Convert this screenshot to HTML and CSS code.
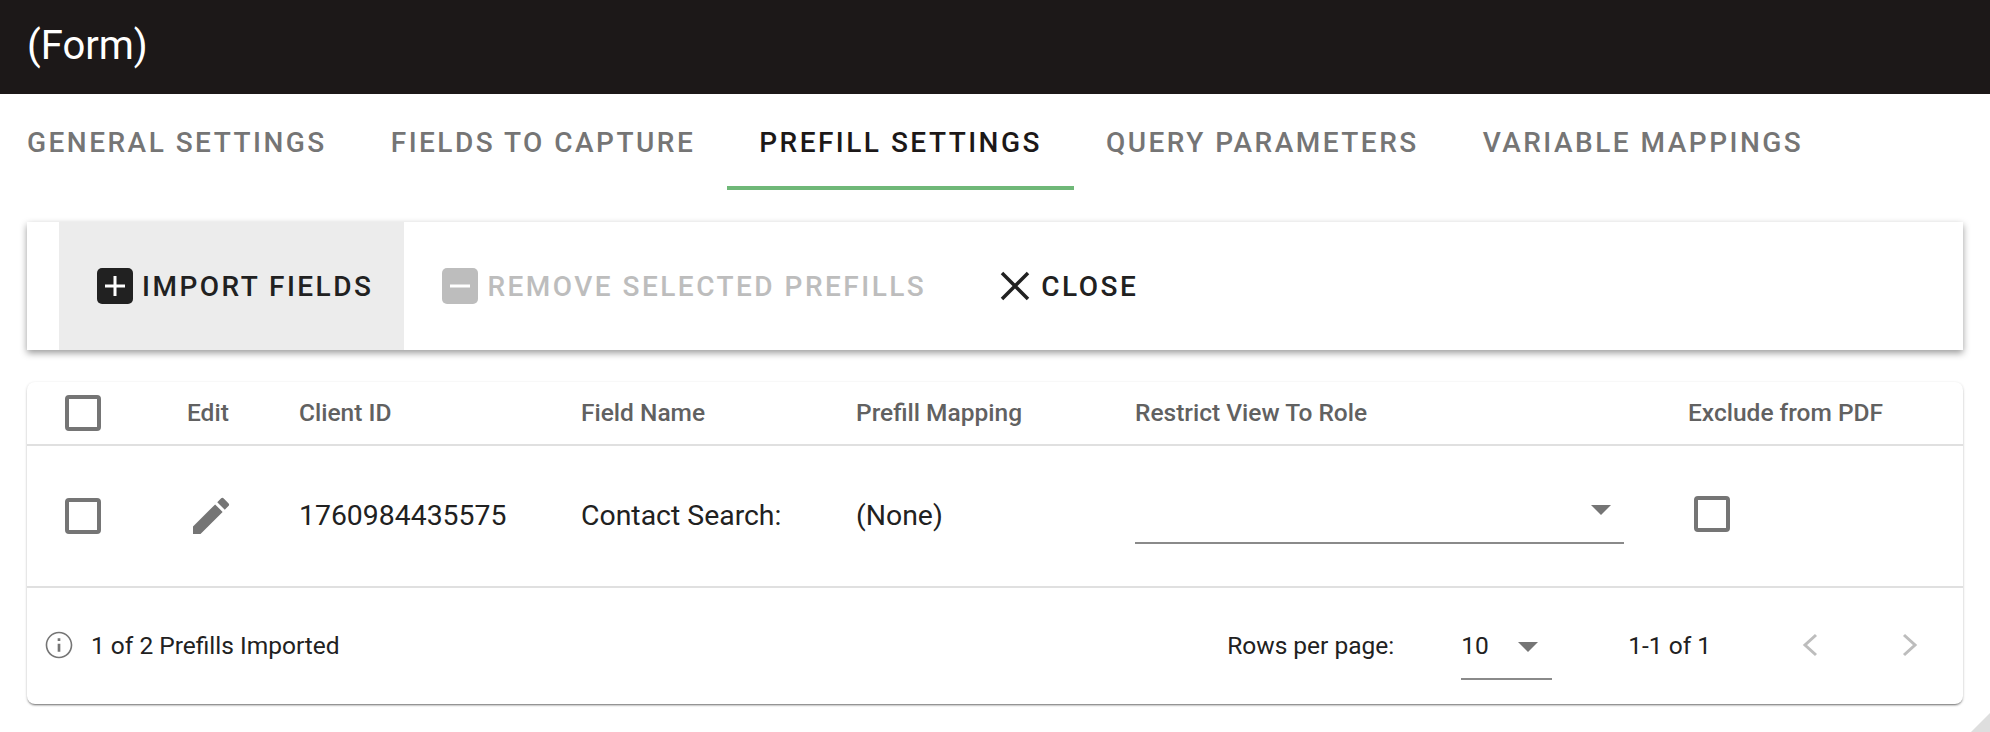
FILE: index.html
```html
<!DOCTYPE html>
<html lang="en">

<head>
	<meta charset="UTF-8">
	<title>(Form)</title>
	<link rel="stylesheet" href="styles.css">
</head>

<body>
	<header class="title-bar">(Form)</header>

	<nav class="tabs">
		<div class="tab">General Settings</div>
		<div class="tab">Fields to Capture</div>
		<div class="tab tab-active">Prefill Settings</div>
		<div class="tab">Query Parameters</div>
		<div class="tab">Variable Mappings</div>
	</nav>

	<div class="toolbar">
		<div class="tool-btn tool-btn-hover">
			<svg class="tool-icon" viewBox="0 0 36 36"><rect width="36" height="36" rx="5" fill="#212121"/><path d="M16.500 8h3v8.500H28v3h-8.500V28h-3v-8.500H8v-3h8.500z" fill="#fff"/></svg>
			Import Fields
		</div>
		<div class="tool-btn tool-btn-disabled">
			<svg class="tool-icon" viewBox="0 0 36 36"><rect width="36" height="36" rx="5" fill="#bdbdbd"/><rect x="8" y="16.500" width="20" height="3" fill="#fff"/></svg>
			Remove Selected Prefills
		</div>
		<div class="tool-btn tool-btn-close">
			<svg class="tool-icon" viewBox="0 0 36 36"><path d="M5 5 31 31M31 5 5 31" stroke="#212121" stroke-width="3.500" fill="none"/></svg>
			Close
		</div>
	</div>

	<div class="card">
		<div class="row row-head">
			<div class="col col-check"><span class="checkbox"></span></div>
			<div class="col col-edit col-text">Edit</div>
			<div class="col col-id col-text">Client ID</div>
			<div class="col col-name col-text">Field Name</div>
			<div class="col col-map col-text">Prefill Mapping</div>
			<div class="col col-role col-text">Restrict View To Role</div>
			<div class="col col-pdf col-text">Exclude from PDF</div>
		</div>
		<div class="row row-body">
			<div class="col col-check"><span class="checkbox"></span></div>
			<div class="col col-edit">
				<svg class="edit-icon" viewBox="0 0 24 24"><path d="M3 17.250V21h3.750L17.810 9.940l-3.750-3.750L3 17.250zM20.710 7.040a.996.996 0 0 0 0-1.410l-2.340-2.340a.996.996 0 0 0-1.410 0l-1.830 1.830 3.750 3.750 1.830-1.830z" fill="#757575"/></svg>
			</div>
			<div class="col col-id col-text">1760984435575</div>
			<div class="col col-name col-text">Contact Search:</div>
			<div class="col col-map col-text">(None)</div>
			<div class="col col-role">
				<div class="select-role"><span class="caret"></span></div>
			</div>
			<div class="col col-pdf"><span class="checkbox checkbox-pdf"></span></div>
		</div>
		<div class="card-foot">
			<div class="foot-note">
				<svg class="info-icon" viewBox="0 0 24 24"><path d="M11 7h2v2h-2zm0 4h2v6h-2zm1-9C6.480 2 2 6.480 2 12s4.480 10 10 10 10-4.480 10-10S17.520 2 12 2zm0 18.800c-4.850 0-8.800-3.950-8.800-8.800S7.150 3.200 12 3.200s8.800 3.950 8.800 8.800-3.950 8.800-8.800 8.800z" fill="#757575"/></svg>
				1 of 2 Prefills Imported
			</div>
			<div class="pager">
				<span class="pager-label">Rows per page:</span>
				<div class="select-rows">10<span class="caret"></span></div>
				<span class="pager-count">1-1 of 1</span>
				<svg class="pager-arrow" viewBox="0 0 24 24"><path d="M19 2 8 12l11 10" fill="none" stroke="#bdbdbd" stroke-width="3"/></svg>
				<svg class="pager-arrow" viewBox="0 0 24 24"><path d="M5 2l11 10L5 22" fill="none" stroke="#bdbdbd" stroke-width="3"/></svg>
			</div>
		</div>
	</div>

	<div class="corner"></div>
</body>

</html>
```

FILE: styles.css
```css
html,
body {
	height: 100%;
}

body {
	margin: 0;
	background-color: #fff;
	font-family: Roboto, "Liberation Sans", sans-serif;
	color: #212121;
	overflow: hidden;
	position: relative;
}

.title-bar {
	height: 94px;
	padding-left: 27px;
	background-color: #1c1818;
	color: #fff;
	font-size: 40px;
	line-height: 92px;
	box-sizing: border-box;
}

/* --- Tabs --- */
.tabs {
	display: flex;
	height: 96px;
}

.tab {
	height: 96px;
	padding: 0 32px;
	box-sizing: border-box;
	font-size: 28px;
	font-weight: 500;
	line-height: 98px;
	letter-spacing: 2.480px;
	text-transform: uppercase;
	white-space: nowrap;
	color: #757575;
}

.tab:first-child {
	padding-left: 27px;
}

.tab-active {
	color: #1c1818;
	border-bottom: 4px solid #6fb878;
}

/* --- Toolbar --- */
.toolbar {
	display: flex;
	height: 128px;
	margin: 32px 27px 0;
	padding-left: 32px;
	background-color: #fff;
	box-shadow: 0 3px 7px rgba(0, 0, 0, 0.4);
}

.tool-btn {
	display: flex;
	align-items: center;
	gap: 9px;
	padding: 0 31px 0 38px;
	font-size: 28px;
	font-weight: 500;
	letter-spacing: 2.480px;
	text-transform: uppercase;
	white-space: nowrap;
}

.tool-btn-hover {
	background-color: #ececec;
}

.tool-btn-disabled {
	color: #bdbdbd;
}

.tool-btn-close {
	gap: 8px;
	padding-left: 40px;
}

.tool-icon {
	width: 36px;
	height: 36px;
}

/* --- Table card --- */
.card {
	margin: 32px 27px 0;
	height: 322px;
	box-sizing: border-box;
	border-radius: 8px;
	background-color: #fff;
	box-shadow: 0 1px 3px rgba(0, 0, 0, 0.2), 0 2px 2px -1px rgba(0, 0, 0, 0.45);
}

.row {
	display: flex;
	align-items: center;
	box-sizing: border-box;
	border-bottom: 2px solid #e0e0e0;
}

.row-head {
	height: 64px;
	font-size: 24.500px;
	font-weight: 500;
	color: #616161;
}

.row-body {
	height: 142px;
	font-size: 28.400px;
}

.col {
	white-space: nowrap;
}

.col-text {
	padding-bottom: 2px;
}

.col-check {
	display: flex;
	width: 160px;
	padding-left: 38px;
	box-sizing: border-box;
}

.col-edit {
	width: 112px;
}

.col-id {
	width: 282px;
}

.col-name {
	width: 275px;
}

.col-map {
	width: 279px;
}

.col-role {
	width: 553px;
}

.checkbox {
	display: block;
	width: 36px;
	height: 36px;
	box-sizing: border-box;
	border: 4px solid #757575;
	border-radius: 4px;
}

.checkbox-pdf {
	margin: -4px 0 0 6px;
}

.edit-icon {
	display: block;
	width: 48px;
	height: 48px;
}

.select-role {
	position: relative;
	width: 489px;
	height: 56px;
	box-sizing: border-box;
	border-bottom: 2px solid #8a8a8a;
}

.caret {
	position: absolute;
	right: 13px;
	top: 17px;
	width: 0;
	height: 0;
	border-left: 10px solid transparent;
	border-right: 10px solid transparent;
	border-top: 10px solid #757575;
}

/* --- Footer --- */
.card-foot {
	display: flex;
	align-items: center;
	justify-content: space-between;
	height: 116px;
	padding: 0 40px 2px 16px;
	box-sizing: border-box;
	font-size: 24.500px;
}

.foot-note {
	display: flex;
	align-items: center;
	gap: 16px;
}

.info-icon {
	width: 32px;
	height: 32px;
}

.pager {
	display: flex;
	align-items: center;
}

.pager-label {
	margin-right: 67px;
}

.select-rows {
	position: relative;
	width: 91px;
	height: 50px;
	line-height: 32px;
	margin-top: 19px;
	box-sizing: border-box;
	border-bottom: 2px solid #8a8a8a;
}

.select-rows .caret {
	right: 14px;
	top: 12px;
}

.pager-count {
	margin-left: 76px;
	margin-right: 86px;
}

.pager-arrow {
	width: 24px;
	height: 24px;
}

.pager-arrow + .pager-arrow {
	margin-left: 78px;
}

.corner {
	position: absolute;
	right: 0;
	bottom: 0;
	width: 0;
	height: 0;
	border-left: 19px solid transparent;
	border-bottom: 19px solid #dedede;
}
```
